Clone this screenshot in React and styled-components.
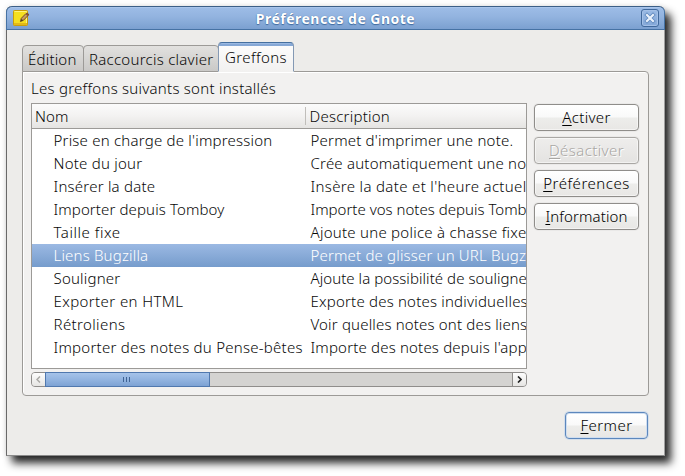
import React from 'react';
import styled, { createGlobalStyle } from 'styled-components';

const Global = createGlobalStyle`
  * { box-sizing: border-box; }
  body {
    margin: 0;
    overflow: hidden;
    background: #fff;
    color: #080808;
    font: 300 15px/23px "Noto Sans", sans-serif;
  }
`;

const Desktop = styled.div`
  height: 476px;
  padding: 6px 20px 20px 6px;
`;

const Window = styled.main`
  display: flex;
  flex-direction: column;
  width: 659px;
  height: 450px;
  background: #edecea;
  border: 1px solid #696969;
  border-right-color: #a0a0a0;
  border-bottom-color: #8a8a8a;
  border-top: 0;
  border-radius: 6px 6px 0 0;
  box-shadow: 6px 7px 8px rgba(0, 0, 0, 0.85), 0 0 6px rgba(0, 0, 0, 0.1);
`;

const TitleBar = styled.header`
  display: flex;
  align-items: center;
  flex: none;
  height: 24px;
  margin: 0 -1px;
  padding: 0 5px 0 6px;
  border: 1px solid #4672a4;
  border-top-color: #3c5f87;
  border-radius: 6px 6px 0 0;
  background: linear-gradient(#9ebde7, #92b3df 45%, #7ba0d0);
  box-shadow: inset 0 1px #a9c5eb;
`;

const Title = styled.h1`
  flex: 1;
  margin: 0;
  padding-top: 1px;
  text-align: center;
  color: #fff;
  font-size: 14px;
  font-weight: 700;
  line-height: 21px;
  letter-spacing: 0.48px;
  text-shadow: 0 1px 1px #3f6a9f, 0 0 1px #4c77ab;
`;

const CloseButton = styled.button`
  display: flex;
  width: 18px;
  height: 18px;
  padding: 0;
  align-items: center;
  justify-content: center;
  background: linear-gradient(#9abae4, #84a8d8);
  border: 1px solid #41699c;
  border-radius: 3px;
  box-shadow: inset 0 0 0 1px #a3c0e7;
`;

const Content = styled.div`
  display: flex;
  flex-direction: column;
  flex: 1;
  padding: 12px 16px 16px 15px;
`;

const Tabs = styled.nav`
  display: flex;
  align-items: flex-end;
  height: 30px;
  margin-bottom: -1px;
  z-index: 1;
`;

const Tab = styled.div`
  width: ${(p) => p.$width}px;
  height: ${(p) => (p.$active ? 30 : 27)}px;
  margin-left: ${(p) => (p.$joined ? -1 : 0)}px;
  padding: ${(p) => (p.$active ? '3px 0 0 6px' : '2px 0 0 5px')};
  border: 1px solid #9c9a97;
  border-bottom-color: ${(p) => (p.$active ? '#f2f1f0' : '#9c9a97')};
  border-radius: 4px 4px 0 0;
  background: linear-gradient(#e2e1df, #cac9c7);
  line-height: 23px;
  white-space: nowrap;
  ${(p) => p.$active && `
    position: relative;
    border-left-color: #8499b4;
    border-right-color: #8499b4;
    border-top-color: #456f9f;
    background: linear-gradient(#9bb9e2 0 1px, #86a8d6 1px 3px, #fcfcfc 3px, #f2f1f0);
  `}
`;

const Panel = styled.section`
  width: 627px;
  height: 325px;
  padding: 5px 9px 8px 8px;
  background: #f2f1f0;
  border: 1px solid #9c9a97;
  border-radius: 0 4px 4px 4px;
  box-shadow: inset 1px 1px #fff;
`;

const Caption = styled.div`
  height: 26px;
  line-height: 23px;
`;

const Columns = styled.div`
  display: flex;
  gap: 7px;
`;

const ListArea = styled.div`
  display: flex;
  flex-direction: column;
  gap: 3px;
  width: 496px;
`;

const Table = styled.div`
  height: 266px;
  overflow: hidden;
  background: #fff;
  border: 1px solid #9c9a97;
`;

const HeaderRow = styled.div`
  display: grid;
  grid-template-columns: 273px 1fr;
  align-items: center;
  height: 25px;
  background: linear-gradient(#fbfbfb, #f3f2f1 50%, #e5e4e2);
  border-bottom: 1px solid #9c9a97;
`;

const HeaderCell = styled.div`
  height: 18px;
  padding-left: ${(p) => (p.$divided ? 3.5 : 3)}px;
  line-height: 19px;
  border-left: ${(p) => (p.$divided ? '1px solid #c0beba' : '0')};
`;

const Row = styled.div`
  display: grid;
  grid-template-columns: 278.5px 1fr;
  height: 23px;
  white-space: nowrap;
  color: ${(p) => (p.$selected ? '#fff' : '#080808')};
  background: ${(p) => (p.$selected ? 'linear-gradient(#9bb9e3, #769ccc)' : 'transparent')};
`;

const Name = styled.span`
  padding-left: 21.5px;
`;

const Spaced = styled.span`
  letter-spacing: ${(p) => p.$spacing}px;
`;

const ScrollBar = styled.div`
  display: flex;
  height: 15px;
  border: 1px solid #8f8d8b;
  border-radius: 4px;
  background: #d4d3d1;
`;

const ScrollButton = styled.div`
  display: flex;
  width: 14px;
  align-items: center;
  justify-content: center;
  background: linear-gradient(#fdfdfd, #e6e5e3);
  border-radius: ${(p) => (p.$end ? '0 3px 3px 0' : '3px 0 0 3px')};
  border-left: ${(p) => (p.$end ? '1px solid #8f8d8b' : '0')};
  margin-left: ${(p) => (p.$end ? 'auto' : '0')};
  padding-right: ${(p) => (p.$end ? '0' : '1px')};
`;

const Thumb = styled.div`
  display: flex;
  gap: 2px;
  width: 165px;
  margin: -1px 0 -1px -1px;
  padding-right: 2px;
  align-items: center;
  justify-content: center;
  border: 1px solid #5078ae;
  background: linear-gradient(#a6c3e9, #95b6e1 45%, #7da2d4);
`;

const Grip = styled.i`
  width: 1px;
  height: 5px;
  background: #3f6394;
`;

const Actions = styled.div`
  display: flex;
  flex-direction: column;
  gap: 6px;
  padding-top: 1px;
`;

const Button = styled.button`
  width: ${(p) => p.$width || 105}px;
  height: 27px;
  padding: 0 0 1px;
  font: inherit;
  line-height: 24px;
  color: #000;
  border: 1px solid #8f8d8a;
  border-radius: 4px;
  background: linear-gradient(#fff, #f9f9f9 48%, #ededeb 52%, #e8e7e5);
  box-shadow: inset 0 0 0 1px rgba(255, 255, 255, 0.5), 0 0 0 1px rgba(0, 0, 0, 0.03);

  &:disabled {
    color: #a9a7a4;
    border-color: #a9a7a4;
    background: linear-gradient(#eeedec, #e4e3e1);
    text-shadow: 1px 1px #fff;
  }
  ${(p) => p.$focused && `
    border-color: #5c87bd;
    box-shadow: inset 0 0 0 1px #d0deef, 0 0 0 1px #d3deeb;
  `}
`;

const Mnemonic = styled.span`
  text-decoration: underline;
  text-decoration-thickness: 1px;
  text-underline-offset: 2px;
`;

const Footer = styled.footer`
  display: flex;
  justify-content: flex-end;
  margin-top: auto;
`;

const PLUGINS = [
  ["Prise en charge de l'impression", 0.21, "Permet d'imprimer une note.", 0.2],
  ['Note du jour', 0.23, 'Crée automatiquement une note', 0.21],
  ['Insérer la date', 0.22, "Insère la date et l'heure actuelles", 0.34],
  ['Importer depuis Tomboy', 0.11, 'Importe vos notes depuis Tomboy', 0.01],
  ['Taille fixe', 0.54, 'Ajoute une police à chasse fixe', 0.26],
  ['Liens Bugzilla', 0.18, 'Permet de glisser un URL Bugzilla', 0.17],
  ['Souligner', 0.2, 'Ajoute la possibilité de souligner', 0.06],
  ['Exporter en HTML', 0.4, 'Exporte des notes individuelles', 0.2],
  ['Rétroliens', 0.38, 'Voir quelles notes ont des liens', 0.17],
  ['Importer des notes du Pense-bêtes', 0.25, "Importe des notes depuis l'application", 0.18],
];

function NoteIcon() {
  return (
    <svg width="17" height="17" viewBox="0 0 17 17">
      <rect x="0.5" y="0.5" width="14" height="15" rx="0.8" fill="#f5df20" stroke="#c99e09" />
      <path d="M1.5 1.5H13.5V13" fill="none" stroke="#fff27a" />
      <path d="M1 13L14 13V15H1Z" fill="#e4b91a" />
      <path d="M7.4 11.6L8.3 8.3L13 3.5C14 2.7 16 3.6 15.5 5L10.6 10.2Z" fill="#c99b62" stroke="#65461d" strokeWidth="0.9" />
      <path d="M8 11L8.6 9L10 10.3Z" fill="#2d2413" />
      <path d="M13.2 3.7L15.3 5.4" stroke="#8b4b35" strokeWidth="1.5" />
    </svg>
  );
}

function CloseIcon() {
  return (
    <svg width="12" height="12" viewBox="0 0 12 12" fill="none" strokeLinecap="square">
      <path d="M3 3L9 9M9 3L3 9" stroke="#5f88bd" strokeWidth="3.8" />
      <path d="M3 3L9 9M9 3L3 9" stroke="#e9f1fb" strokeWidth="2.2" />
    </svg>
  );
}

function Chevron({ right }) {
  return (
    <svg width="5" height="7" viewBox="0 0 5 7" fill="none">
      <path
        d={right ? 'M1 0.5L4 3.5L1 6.5' : 'M4 0.5L1 3.5L4 6.5'}
        stroke={right ? '#222' : '#aaa9a6'}
        strokeWidth={right ? 1.7 : 1.5}
      />
    </svg>
  );
}

function Action({ label, spacing, ...rest }) {
  return (
    <Button {...rest}>
      <Spaced $spacing={spacing}>
        <Mnemonic>{label[0]}</Mnemonic>
        {label.slice(1)}
      </Spaced>
    </Button>
  );
}

export default function App() {
  return (
    <Desktop>
      <Global />
      <Window>
        <TitleBar>
          <NoteIcon />
          <Title>Préférences de Gnote</Title>
          <CloseButton aria-label="Fermer"><CloseIcon /></CloseButton>
        </TitleBar>
        <Content>
          <Tabs>
            <Tab $width={62}><Spaced $spacing={0.2}>Édition</Spaced></Tab>
            <Tab $width={136} $joined><Spaced $spacing={0.26}>Raccourcis clavier</Spaced></Tab>
            <Tab $width={76} $joined $active><Spaced $spacing={0.4}>Greffons</Spaced></Tab>
          </Tabs>
          <Panel>
            <Caption><Spaced $spacing={0.25}>Les greffons suivants sont installés</Spaced></Caption>
            <Columns>
              <ListArea>
                <Table>
                  <HeaderRow>
                    <HeaderCell><Spaced $spacing={0.1}>Nom</Spaced></HeaderCell>
                    <HeaderCell $divided><Spaced $spacing={0.24}>Description</Spaced></HeaderCell>
                  </HeaderRow>
                  {PLUGINS.map(([name, nameSpacing, description, descriptionSpacing]) => (
                    <Row key={name} $selected={name === 'Liens Bugzilla'}>
                      <Name><Spaced $spacing={nameSpacing}>{name}</Spaced></Name>
                      <Spaced $spacing={descriptionSpacing}>{description}</Spaced>
                    </Row>
                  ))}
                </Table>
                <ScrollBar>
                  <ScrollButton><Chevron /></ScrollButton>
                  <Thumb><Grip /><Grip /><Grip /></Thumb>
                  <ScrollButton $end><Chevron right /></ScrollButton>
                </ScrollBar>
              </ListArea>
              <Actions>
                <Action label="Activer" spacing={0.35} />
                <Action label="Désactiver" spacing={0.4} disabled />
                <Action label="Préférences" spacing={0.52} />
                <Action label="Information" spacing={0.12} />
              </Actions>
            </Columns>
          </Panel>
          <Footer>
            <Action label="Fermer" spacing={0.45} $width={83} $focused />
          </Footer>
        </Content>
      </Window>
    </Desktop>
  );
}
